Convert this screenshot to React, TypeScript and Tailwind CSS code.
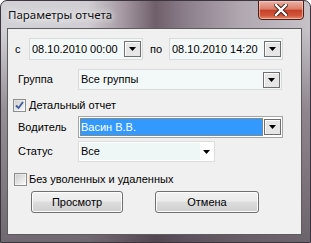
import React from "react";

const Tri = () => (
  <svg width="7" height="4" viewBox="0 0 7 4"><path d="M0 0H7L3.5 4Z" fill="#000" /></svg>
);

const ArrowBtn = () => (
  <div className="w-[17px] h-[16px] border border-[#6f6f6f] bg-[#e6e6e6] flex items-center justify-center shadow-[inset_1px_1px_0_#ffffff]">
    <Tri />
  </div>
);

const DateField = ({ value }: { value: string }) => (
  <div className="w-[114px] h-[22px] border border-[#dadada] bg-[#f3f9f9] flex items-center justify-between pl-[2px] pr-[1px]">
    <span>{value}</span>
    <ArrowBtn />
  </div>
);

const Check = ({ checked }: { checked: boolean }) => (
  <div className="w-[13px] h-[13px] border border-[#8e8f8f] bg-[linear-gradient(135deg,#dcdcdc,#ffffff)] flex items-center justify-center">
    <div className="w-[9px] h-[9px] bg-[linear-gradient(135deg,#cfcfcf,#f6f6f6)] flex items-center justify-center">
      {checked && (
        <svg width="9" height="9" viewBox="0 0 9 9">
          <path d="M1 4.5L3.5 7L8 1" stroke="#3d5a9c" strokeWidth="1.8" fill="none" />
        </svg>
      )}
    </div>
  </div>
);

const Btn = ({ label, w }: { label: string; w: string }) => (
  <div
    className={`${w} h-[22px] rounded-[3px] border border-[#707070] bg-[linear-gradient(180deg,#f2f2f2_0%,#ebebeb_45%,#dddddd_50%,#cfcfcf_100%)] shadow-[inset_0_0_0_1px_#fcfcfc] flex items-center justify-center`}
  >
    {label}
  </div>
);

export default function App() {
  return (
    <div
      className="w-[311px] h-[243px] overflow-hidden rounded-t-[7px] border border-[#3c3540] bg-[linear-gradient(180deg,rgba(255,255,255,0)_0%,rgba(255,255,255,0)_12%,rgba(90,76,88,0.5)_45%,rgba(70,60,70,0.7)_100%),linear-gradient(90deg,#d2d2d6_0%,#d0ced2_28%,#a396a0_40%,#6f5f6a_50%,#8c7f8c_60%,#b1a8b1_78%,#c6c2c8_100%)] flex flex-col"
      style={{ fontFamily: '"Liberation Sans", Arial, sans-serif', fontSize: "11px", color: "#000" }}
    >
      <div className="h-[27px] flex items-start justify-between shrink-0">
        <div
          className="pl-[7px] pt-[6px] text-[11.5px] text-[#111] [text-shadow:0_0_6px_#ffffff,0_0_10px_#ffffff]"
          style={{ fontFamily: '"Noto Sans", sans-serif', lineHeight: "16px" }}
        >
          Параметры отчета
        </div>
        <div className="mr-[6px] mt-[-1px] w-[46px] h-[20px] rounded-b-[4px] border border-[#4a1f18] bg-[linear-gradient(180deg,#eab3a5_0%,#dc7d68_45%,#c7412a_52%,#d0553b_80%,#e58b6a_100%)] shadow-[inset_0_0_0_1px_rgba(255,210,200,0.6)] flex items-center justify-center">
          <svg width="14" height="12" viewBox="0 0 14 12">
            <path d="M2 1L12 11M12 1L2 11" stroke="#3a1a14" strokeWidth="4.2" strokeLinecap="square" />
            <path d="M2 1L12 11M12 1L2 11" stroke="#ffffff" strokeWidth="2.4" strokeLinecap="square" />
          </svg>
        </div>
      </div>
      <div className="ml-[6px] w-[295px] h-[207px] border border-[#5c5c5c] bg-[#f0f0f0] flex flex-col">
        <div className="mt-[9px] h-[22px] flex items-center pl-[7px]">
          <span className="w-[14px]">с</span>
          <DateField value="08.10.2010 00:00" />
          <span className="ml-[7px] w-[19px]">по</span>
          <DateField value="08.10.2010 14:20" />
        </div>
        <div className="mt-[9px] h-[21px] flex items-center pl-[10px]">
          <span className="w-[60px]">Группа</span>
          <div className="w-[204px] h-[21px] border border-[#dadada] bg-[#f3f9f9] flex items-center justify-between pl-[2px] pr-[1px]">
            <span>Все группы</span>
            <ArrowBtn />
          </div>
        </div>
        <div className="mt-[9px] h-[13px] flex items-center pl-[5px] gap-[3px]">
          <Check checked />
          <span>Детальный отчет</span>
        </div>
        <div className="mt-[4px] h-[22px] flex items-center pl-[10px]">
          <span className="w-[60px]">Водитель</span>
          <div className="w-[205px] h-[22px] border border-[#a5a5a5] bg-white flex items-center p-[1px] gap-[1px]">
            <div className="flex-1 h-[18px] bg-[#3399ff] text-white flex items-center pl-[1px] outline-1 outline-dotted outline-[#c08020] -outline-offset-1">
              Васин В.В.
            </div>
            <ArrowBtn />
          </div>
        </div>
        <div className="mt-[3px] h-[21px] flex items-center pl-[10px]">
          <span className="w-[60px]">Статус</span>
          <div className="w-[137px] h-[21px] border border-[#dcdcdc] bg-white flex items-center p-[1px]">
            <div className="w-[120px] h-[17px] bg-[#eef6f6] flex items-center pl-[1px]">Все</div>
            <div className="flex-1 flex items-center justify-center">
              <Tri />
            </div>
          </div>
        </div>
        <div className="mt-[11px] h-[13px] flex items-center pl-[6px] gap-[2px]">
          <Check checked={false} />
          <span>Без уволенных и удаленных</span>
        </div>
        <div className="mt-[5px] flex pl-[23px] gap-[32px]">
          <Btn label="Просмотр" w="w-[92px]" />
          <Btn label="Отмена" w="w-[104px]" />
        </div>
      </div>
    </div>
  );
}
